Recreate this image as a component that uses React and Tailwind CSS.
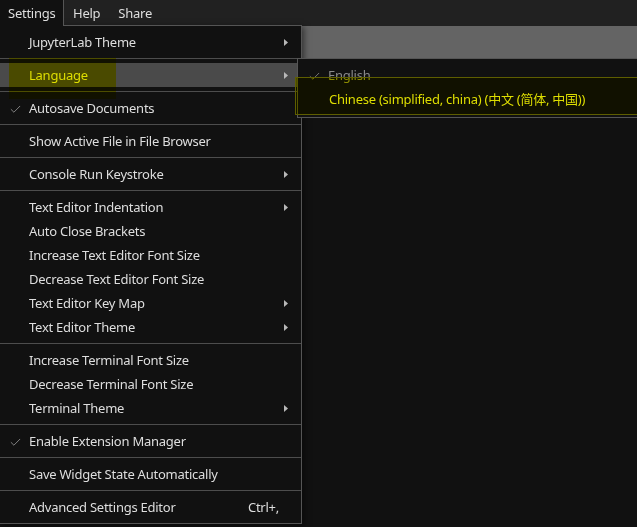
import { Check } from 'lucide-react'

const groups = [
  [{ label: 'JupyterLab Theme', sub: true }],
  [{ label: 'Language', sub: true, active: true }],
  [{ label: 'Autosave Documents', checked: true }],
  [{ label: 'Show Active File in File Browser' }],
  [{ label: 'Console Run Keystroke', sub: true }],
  [
    { label: 'Text Editor Indentation', sub: true },
    { label: 'Auto Close Brackets' },
    { label: 'Increase Text Editor Font Size' },
    { label: 'Decrease Text Editor Font Size' },
    { label: 'Text Editor Key Map', sub: true },
    { label: 'Text Editor Theme', sub: true },
  ],
  [
    { label: 'Increase Terminal Font Size' },
    { label: 'Decrease Terminal Font Size' },
    { label: 'Terminal Theme', sub: true },
  ],
  [{ label: 'Enable Extension Manager', checked: true }],
  [{ label: 'Save Widget State Automatically' }],
  [{ label: 'Advanced Settings Editor', shortcut: 'Ctrl+,' }],
]

function Arrow() {
  return (
    <svg width="4" height="7" viewBox="0 0 4 7" className="shrink-0 mt-[1px]">
      <path d="M0 0 L4 3.5 L0 7 Z" fill="#b8b8b8" />
    </svg>
  )
}

function Item({ item }) {
  return (
    <div
      className={`h-[24px] flex items-center pr-[13px] ${
        item.active ? 'bg-[#4a4a4a]' : ''
      }`}
    >
      <div className="w-[29px] shrink-0 flex justify-center pl-[1px] pt-[2px]">
        {item.checked && <Check size={13} strokeWidth={1.5} color="#9a9a9a" />}
      </div>
      <span className="flex-1 whitespace-nowrap pt-[2px]">{item.label}</span>
      {item.sub && <Arrow />}
      {item.shortcut && <span className="pr-[9px] pt-[2px]">{item.shortcut}</span>}
    </div>
  )
}

export default function App() {
  return (
    <div
      className="relative isolate w-[637px] h-[527px] overflow-hidden bg-[#111111] text-[#dedede] text-[13px] tracking-[-0.25px]"
      style={{ fontFamily: '"Noto Sans", "Noto Sans CJK SC", sans-serif' }}
    >
      {/* page behind the menu */}
      <div className="h-[26px] bg-[#212121] flex items-center pt-[2px]">
        <div className="w-[63px]" />
        <span className="ml-[10px]">Help</span>
        <span className="ml-[18px]">Share</span>
      </div>
      <div className="h-[32px] bg-[#646464]" />

      {/* menu bar active title */}
      <div className="absolute left-0 top-0 z-20 h-[26px] w-[64px] bg-[#111111] border-r border-[#555555] flex items-center pl-[8px] pt-[2px]">
        Settings
      </div>

      {/* settings menu */}
      <div className="absolute left-0 top-[25px] z-10 w-[302px] bg-[#111111] border border-l-0 border-[#555555] pt-[4px] pb-[4px] shadow-[2px_2px_6px_rgba(0,0,0,0.5)]">
        {groups.map((g, gi) => (
          <div key={gi}>
            {gi > 0 && <div className="h-px bg-[#4d4d4d] my-[4px]" />}
            {g.map((item) => (
              <Item key={item.label} item={item} />
            ))}
          </div>
        ))}
      </div>

      {/* language submenu */}
      <div className="absolute left-[297px] top-[58px] z-10 w-[360px] bg-[#111111] border border-[#555555] pt-[4px] pb-[6px]">
        <div className="h-[24px] flex items-center text-[#8a8a8a]">
          <div className="w-[30px] shrink-0 flex justify-center pl-[2px] pt-[2px]">
            <Check size={13} strokeWidth={1.5} color="#8a8a8a" />
          </div>
          <span className="pt-[2px]">English</span>
        </div>
        <div className="h-[24px] flex items-center">
          <div className="w-[31px] shrink-0" />
          <span className="whitespace-nowrap pt-[2px]">Chinese (simplified, china) (中文 (简体, 中国))</span>
        </div>
      </div>

      {/* yellow highlight annotations */}
      <div className="absolute left-[9px] top-[58px] z-30 w-[107px] h-[41px] bg-[#ffff00] mix-blend-multiply" />
      <div className="absolute left-[295px] top-[77px] z-30 w-[360px] h-[38px] bg-[#ffff00] mix-blend-multiply" />
      <div className="absolute left-[295px] top-[77px] z-30 w-[360px] h-[38px] border border-[#5e5e00]" />
    </div>
  )
}
